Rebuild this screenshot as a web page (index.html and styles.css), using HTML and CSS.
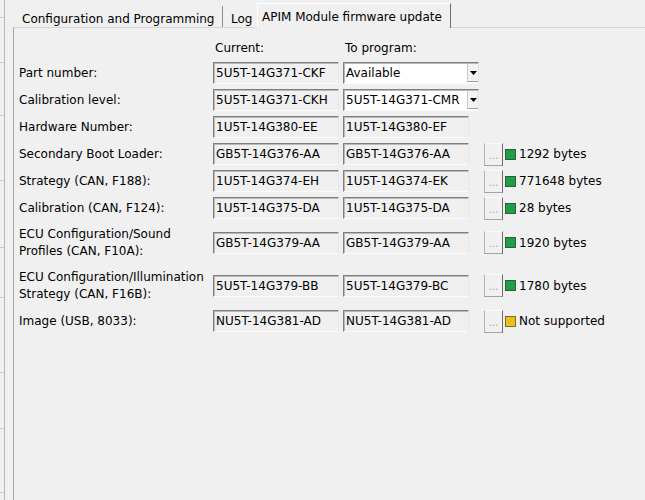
FILE: index.html
```html
<!DOCTYPE html>
<html>
<head>
<meta charset="utf-8">
<title>APIM Module firmware update</title>
<link rel="stylesheet" href="styles.css">
</head>
<body>
<div class="app">
  <div class="side">
    <div class="seg"></div><div class="seg"></div><div class="seg"></div>
    <div class="seg"></div><div class="seg"></div><div class="seg"></div>
    <div class="seg"></div><div class="seg"></div><div class="seg"></div>
  </div>
  <div class="tabctl">
    <div class="tabs">
      <div class="tab tab-cfg">Configuration and Programming</div>
      <div class="tab tab-log">Log</div>
      <div class="tab tab-active">APIM Module firmware update</div>
    </div>
    <div class="panel">
      <div class="form">
        <div class="row hdr">
          <div class="lbl"></div>
          <div class="hcell">Current:</div>
          <div class="hcell hto">To program:</div>
        </div>
        <div class="row">
          <div class="lbl">Part number:</div>
          <div class="fld">5U5T-14G371-CKF</div>
          <div class="to"><div class="sel"><span class="seltxt">Available</span><span class="arrow"><svg width="7" height="4" viewBox="0 0 7 4"><path d="M0 0H7L3.5 4Z" fill="#000"/></svg></span></div></div>
        </div>
        <div class="row">
          <div class="lbl">Calibration level:</div>
          <div class="fld">5U5T-14G371-CKH</div>
          <div class="to"><div class="sel"><span class="seltxt">5U5T-14G371-CMR</span><span class="arrow"><svg width="7" height="4" viewBox="0 0 7 4"><path d="M0 0H7L3.5 4Z" fill="#000"/></svg></span></div></div>
        </div>
        <div class="row">
          <div class="lbl">Hardware Number:</div>
          <div class="fld">1U5T-14G380-EE</div>
          <div class="to"><div class="fld">1U5T-14G380-EF</div></div>
        </div>
        <div class="row">
          <div class="lbl">Secondary Boot Loader:</div>
          <div class="fld">GB5T-14G376-AA</div>
          <div class="to"><div class="fld">GB5T-14G376-AA</div></div>
          <div class="btn">...</div>
          <div class="status"><span class="sq ok"></span>1292 bytes</div>
        </div>
        <div class="row">
          <div class="lbl">Strategy (CAN, F188):</div>
          <div class="fld">1U5T-14G374-EH</div>
          <div class="to"><div class="fld">1U5T-14G374-EK</div></div>
          <div class="btn">...</div>
          <div class="status"><span class="sq ok"></span>771648 bytes</div>
        </div>
        <div class="row">
          <div class="lbl">Calibration (CAN, F124):</div>
          <div class="fld">1U5T-14G375-DA</div>
          <div class="to"><div class="fld">1U5T-14G375-DA</div></div>
          <div class="btn">...</div>
          <div class="status"><span class="sq ok"></span>28 bytes</div>
        </div>
        <div class="row tall1">
          <div class="lbl">ECU Configuration/Sound<br>Profiles (CAN, F10A):</div>
          <div class="fld">GB5T-14G379-AA</div>
          <div class="to"><div class="fld">GB5T-14G379-AA</div></div>
          <div class="btn">...</div>
          <div class="status"><span class="sq ok"></span>1920 bytes</div>
        </div>
        <div class="row tall2">
          <div class="lbl">ECU Configuration/Illumination<br>Strategy (CAN, F16B):</div>
          <div class="fld">5U5T-14G379-BB</div>
          <div class="to"><div class="fld">5U5T-14G379-BC</div></div>
          <div class="btn">...</div>
          <div class="status"><span class="sq ok"></span>1780 bytes</div>
        </div>
        <div class="row">
          <div class="lbl">Image (USB, 8033):</div>
          <div class="fld">NU5T-14G381-AD</div>
          <div class="to"><div class="fld">NU5T-14G381-AD</div></div>
          <div class="btn">...</div>
          <div class="status"><span class="sq warn"></span>Not supported</div>
        </div>
      </div>
    </div>
  </div>
</div>
</body>
</html>
```

FILE: styles.css
```css
html, body {
  margin: 0;
  padding: 0;
  background: #f0f0f0;
}
body {
  font-family: "DejaVu Sans", sans-serif;
  font-size: 12px;
  color: #000;
  overflow: hidden;
}
.app {
  display: flex;
  height: 500px;
}
.side {
  width: 4px;
  flex: none;
  border-right: 1px solid #b9b9b9;
}
.seg {
  border-bottom: 1px solid #c6c6c6;
}
.seg:nth-child(1) { height: 17px; }
.seg:nth-child(2) { height: 44px; }
.seg:nth-child(3) { height: 52px; }
.seg:nth-child(4) { height: 64px; }
.seg:nth-child(5) { height: 66px; }
.seg:nth-child(6) { height: 49px; }
.seg:nth-child(7) { height: 74px; }
.seg:nth-child(8) { height: 55px; }
.seg:nth-child(9) { height: 63px; }

.tabctl {
  margin-left: 8px;
  flex: 1;
  display: flex;
  flex-direction: column;
}
.tabs {
  height: 27px;
  display: flex;
  align-items: flex-end;
  flex: none;
}
.tab {
  box-sizing: border-box;
  height: 21px;
  padding: 5px 0 0 9px;
  line-height: 16px;
  white-space: nowrap;
  flex: none;
}
.tab-cfg {
  width: 210px;
  border-right: 1px solid #8e8e8e;
}
.tab-log {
  width: 34px;
  padding-left: 8px;
}
.tab-active {
  width: 194px;
  height: 25px;
  margin-bottom: -1px;
  padding: 5px 0 0 4px;
  border-top: 1px solid #ffffff;
  border-left: 1px solid #ffffff;
  border-right: 1px solid #6d6d6d;
  background: #f0f0f0;
  position: relative;
  z-index: 1;
}
.panel {
  flex: 1;
  border-left: 1px solid #a5a5a5;
  border-top: 1px solid #d6d6d6;
  padding: 11px 0 0 5px;
}
.form {
  display: flex;
  flex-direction: column;
  gap: 5px;
}
.row {
  display: flex;
  align-items: center;
  height: 22px;
}
.row.hdr { height: 18px; }
.row.tall1 { height: 37px; }
.row.tall2 { height: 39px; }
.lbl {
  width: 194px;
  flex: none;
  line-height: 17px;
  white-space: nowrap;
}
.hcell {
  width: 126px;
  flex: none;
  padding-left: 2px;
  box-sizing: border-box;
}
.hcell.hto {
  margin-left: 4px;
}
.fld {
  box-sizing: border-box;
  width: 126px;
  height: 22px;
  flex: none;
  border: 1px solid;
  border-color: #7f7f7f #e6e6e6 #fbfbfb #7f7f7f;
  box-shadow: inset 1px 1px 0 #b9b9b9;
  padding-left: 2px;
  line-height: 20px;
  white-space: nowrap;
  overflow: hidden;
}
.to {
  width: 136px;
  margin-left: 4px;
  flex: none;
}
.sel {
  box-sizing: border-box;
  width: 136px;
  height: 22px;
  display: flex;
  align-items: stretch;
  background: #ffffff;
  border: 1px solid;
  border-color: #7f7f7f #e6e6e6 #fbfbfb #7f7f7f;
  box-shadow: inset 1px 1px 0 #b9b9b9;
}
.seltxt {
  flex: 1;
  padding-left: 2px;
  line-height: 20px;
  white-space: nowrap;
  overflow: hidden;
}
.arrow {
  width: 11px;
  flex: none;
  box-sizing: border-box;
  margin: 1px 0 1px 0;
  border-left: 1px solid #c8c8c8;
  border-bottom: 1px solid #a0a0a0;
  background: #f3f3f3;
  display: flex;
  align-items: center;
  justify-content: center;
}
.arrow svg { display: block; }
.btn {
  box-sizing: border-box;
  width: 19px;
  height: 23px;
  margin-left: 5px;
  flex: none;
  border: 1px solid;
  border-color: #fafafa #6a6a6a #a3a3a3 #b3b3b3;
  background: #f0f0f0;
  color: #a0a0a0;
  font-size: 10px;
  line-height: 10px;
  display: flex;
  align-items: flex-end;
  justify-content: center;
  padding-bottom: 4px;
}
.status {
  display: flex;
  align-items: center;
  margin-left: 2px;
  white-space: nowrap;
}
.sq {
  box-sizing: border-box;
  width: 11px;
  height: 11px;
  margin-right: 3px;
  border: 1px solid;
  flex: none;
}
.sq.ok {
  background: #1f9e4a;
  border-color: #2e5e3a;
}
.sq.warn {
  background: #e8c21c;
  border-color: #7e6b22;
}
```
